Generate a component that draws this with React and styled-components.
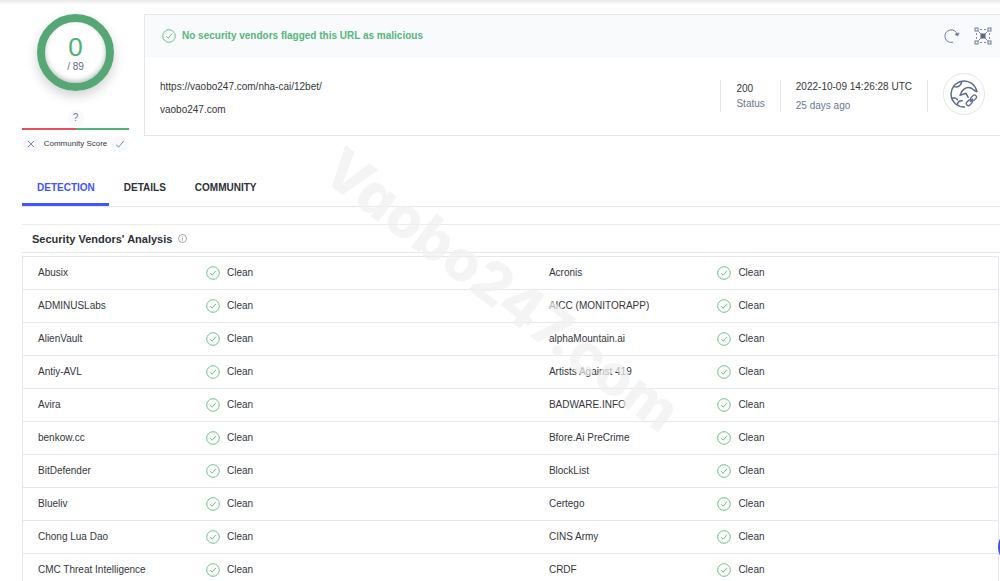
import React, { useState } from "react";
import styled, { createGlobalStyle } from "styled-components";

const GlobalStyle = createGlobalStyle`
    * {
        box-sizing: border-box;
    }

    body {
        margin: 0;
        overflow: hidden;
        background: #fff;
        color: #34363b;
        font-family: "Liberation Sans", Arial, sans-serif;
        font-size: 10px;
        line-height: 16px;
    }

    button {
        padding: 0;
        border: 0;
        background: none;
        color: inherit;
        font: inherit;
        cursor: pointer;
    }
`;

const vendors = [
    ["Abusix", "Acronis"],
    ["ADMINUSLabs", "AICC (MONITORAPP)"],
    ["AlienVault", "alphaMountain.ai"],
    ["Antiy-AVL", "Artists Against 419"],
    ["Avira", "BADWARE.INFO"],
    ["benkow.cc", "Bfore.Ai PreCrime"],
    ["BitDefender", "BlockList"],
    ["Blueliv", "Certego"],
    ["Chong Lua Dao", "CINS Army"],
    ["CMC Threat Intelligence", "CRDF"],
];

const tabs = ["DETECTION", "DETAILS", "COMMUNITY"];

function CheckIcon() {
    return (
        <svg width="14" height="14" viewBox="0 0 14 14" fill="none" stroke="#69c389" aria-hidden="true">
            <circle cx="7" cy="7" r="6.3" />
            <path d="M4.2 7.2l2 2 3.7-4.4" />
        </svg>
    );
}

function RefreshIcon() {
    return (
        <svg width="16" height="16" viewBox="0 0 16 16" fill="none" stroke="#6f7896" aria-hidden="true">
            <path d="M9 14.2A6.3 6.3 0 1 1 13.4 7" />
            <path d="M10.8 6.2l2.9 1.9 1.5-3.2z" fill="#6f7896" strokeWidth="0.5" />
        </svg>
    );
}

function GraphIcon() {
    return (
        <svg width="18" height="18" viewBox="0 0 18 18" fill="none" stroke="#6f7896" aria-hidden="true">
            <rect x="1" y="1" width="3" height="3" />
            <rect x="14" y="1" width="3" height="3" />
            <rect x="1" y="14" width="3" height="3" />
            <rect x="14" y="14" width="3" height="3" />
            <path d="M6 2.5h2M10 2.5h2M6 15.5h2M10 15.5h2M2.5 6v2M2.5 10v2M15.5 6v2M15.5 10v2" strokeWidth="0.9" />
            <path d="M4.3 4.3l9.4 9.4M13.7 4.3l-9.4 9.4" strokeWidth="0.9" />
            <rect x="6.5" y="6.5" width="5" height="5" fill="#5c6788" stroke="none" />
        </svg>
    );
}

function GlobeIcon() {
    return (
        <svg width="28" height="28" viewBox="0 0 28 28" fill="none" stroke="#5f6b8e" strokeWidth="1.5" strokeLinecap="round" strokeLinejoin="round" aria-hidden="true">
            <path d="M14.5 27A13 13 0 1 1 26.8 11.5" />
            <path d="M4.4 6.6c3.4 1 6.4-.6 7.2-4.6" />
            <path d="M26.8 11.5c-2-.2-3-1.6-5-3-2.400-1.400-5.800-1-7.800.6-1.800 1.400-3.400 3.600-4 6.200l6-2 2.200 4" />
            <path d="M1.800 18.200c2.600-.6 5 .2 5.800 1.600" />
            <path d="M7.400 24.400c.2-2.400 2-4 4.800-3.600" />
            <rect x="20.400" y="15.800" width="6.400" height="4.200" rx="2.100" transform="rotate(-45 23.600 17.900)" strokeWidth="1.300" />
            <rect x="16" y="20.600" width="6.400" height="4.200" rx="2.100" transform="rotate(-45 19.200 22.700)" strokeWidth="1.300" />
            <path d="M20.200 21.600l2.600-2.600" strokeWidth="1.300" />
        </svg>
    );
}

function InfoIcon() {
    return (
        <svg width="9" height="9" viewBox="0 0 9 9" fill="none" stroke="#8b90a5" strokeWidth="0.8" aria-hidden="true">
            <circle cx="4.5" cy="4.5" r="4" />
            <path d="M4.5 4v2.8M4.5 2.2v.9" />
        </svg>
    );
}

function Verdict() {
    return (
        <VerdictBox>
            <CheckIcon />
            Clean
        </VerdictBox>
    );
}

function App() {
    const [activeTab, setActiveTab] = useState(tabs[0]);

    return (
        <>
            <GlobalStyle />
            <Page>
                <Summary>
                    <Score>
                        <Gauge>
                            <GaugeValue>0</GaugeValue>
                            <span>/ 89</span>
                        </Gauge>
                        <Bubble>?</Bubble>
                        <ScoreLine />
                        <Votes>
                            <VoteButton type="button" aria-label="Vote down">
                                <svg width="8" height="8" viewBox="0 0 8 8" stroke="#7f88a2" fill="none">
                                    <path d="M1 1l6 6M7 1L1 7" />
                                </svg>
                            </VoteButton>
                            <span>Community Score</span>
                            <VoteButton type="button" aria-label="Vote up">
                                <svg width="8" height="8" viewBox="0 0 8 8" stroke="#7f88a2" fill="none">
                                    <path d="M0 4.6l2.6 2.6L7.8.8" />
                                </svg>
                            </VoteButton>
                        </Votes>
                    </Score>
                    <Card>
                        <CardHeader>
                            <CheckIcon />
                            <Headline>No security vendors flagged this URL as malicious</Headline>
                            <IconButton type="button" aria-label="Reanalyze">
                                <RefreshIcon />
                            </IconButton>
                            <IconButton type="button" aria-label="Graph">
                                <GraphIcon />
                            </IconButton>
                        </CardHeader>
                        <CardBody>
                            <Address>
                                <div>https://vaobo247.com/nha-cai/12bet/</div>
                                <div>vaobo247.com</div>
                            </Address>
                            <Fact>
                                <div>200</div>
                                <Muted>Status</Muted>
                            </Fact>
                            <Fact $gap="4px">
                                <div>2022-10-09 14:26:28 UTC</div>
                                <Muted>25 days ago</Muted>
                            </Fact>
                            <Fact>
                                <GlobeBadge>
                                    <GlobeIcon />
                                </GlobeBadge>
                            </Fact>
                        </CardBody>
                    </Card>
                </Summary>

                <Tabs role="tablist">
                    {tabs.map((tab) => (
                        <Tab
                            key={tab}
                            type="button"
                            role="tab"
                            aria-selected={tab === activeTab}
                            $active={tab === activeTab}
                            onClick={() => setActiveTab(tab)}
                        >
                            {tab}
                        </Tab>
                    ))}
                </Tabs>

                <SectionTitle>
                    Security Vendors' Analysis
                    <InfoIcon />
                </SectionTitle>
                <VendorTable>
                    <colgroup>
                        <col style={{ width: "18.8%" }} />
                        <col style={{ width: "33.6%" }} />
                        <col style={{ width: "18.8%" }} />
                        <col />
                    </colgroup>
                    <tbody>
                        {vendors.map(([left, right]) => (
                            <tr key={left}>
                                <NameCell>{left}</NameCell>
                                <StatusCell><Verdict /></StatusCell>
                                <NameCell>{right}</NameCell>
                                <StatusCell><Verdict /></StatusCell>
                            </tr>
                        ))}
                    </tbody>
                </VendorTable>
            </Page>
            <Watermark>Vaobo247.com</Watermark>
            <ChatButton type="button" aria-label="Open chat" />
        </>
    );
}

export default App;

const Page = styled.div`
    padding: 14px 0 0 22px;
    background: linear-gradient(#e9e9ea, #fff) top / 100% 5px no-repeat;
`;

const Summary = styled.header`
    display: flex;
    align-items: flex-start;
    gap: 15px;
`;

const Score = styled.div`
    display: flex;
    flex-direction: column;
    align-items: center;
    width: 107px;
    font-size: 8px;
`;

const Gauge = styled.div`
    display: flex;
    flex-direction: column;
    align-items: center;
    justify-content: center;
    width: 77px;
    height: 77px;
    border: 8px solid #55a775;
    border-radius: 50%;
    box-shadow: 0 5px 12px rgba(0, 0, 0, 0.18), inset 0 -2px 5px rgba(0, 0, 0, 0.25);
    color: #5f6a8a;
    font-size: 10px;
    line-height: 12px;
`;

const GaugeValue = styled.div`
    color: #4cb270;
    font-size: 26px;
    line-height: 28px;
`;

const Bubble = styled.div`
    width: 16px;
    height: 16px;
    margin-top: 19px;
    border-radius: 50%;
    background: #f8f9fc;
    color: #6f7896;
    font-size: 10px;
    text-align: center;
`;

const ScoreLine = styled.div`
    width: 100%;
    height: 2px;
    margin: 2px 0 6px;
    background: linear-gradient(90deg, #e5505f 50%, #55b077 50%);
`;

const Votes = styled.div`
    display: flex;
    align-items: center;
    justify-content: space-between;
    width: 100%;
`;

const VoteButton = styled.button`
    display: flex;
    align-items: center;
    justify-content: center;
    width: 18px;
    height: 16px;
    border-radius: 50%;
    background: #f8f9fc;
`;

const Card = styled.section`
    flex: 1;
    border: 1px solid #e6e7ea;
    border-right: 0;
`;

const CardHeader = styled.div`
    display: flex;
    align-items: center;
    height: 42px;
    padding: 0 8px 0 17px;
    background: #f8fafc;
`;

const Headline = styled.h1`
    flex: 1;
    margin: 0 0 0 6px;
    color: #55b77a;
    font-size: 10px;
`;

const IconButton = styled.button`
    display: flex;
    margin-left: 14px;
`;

const CardBody = styled.div`
    display: flex;
    align-items: center;
    height: 78px;
    padding-right: 15px;
`;

const Address = styled.div`
    display: flex;
    flex: 1;
    flex-direction: column;
    gap: 7px;
    padding: 4px 0 0 15px;
`;

const Fact = styled.div`
    display: flex;
    flex-direction: column;
    justify-content: center;
    gap: ${(props) => props.$gap || "0"};
    height: 32px;
    padding: 0 15px;
    border-left: 1px solid #e6e7ea;
    line-height: 15px;

    &:last-child {
        padding-right: 0;
    }
`;

const Muted = styled.div`
    color: #6a7593;
`;

const GlobeBadge = styled.div`
    display: flex;
    flex: none;
    align-items: center;
    justify-content: center;
    width: 42px;
    height: 42px;
    margin-bottom: 4px;
    border: 1px solid #e4e6ea;
    border-radius: 50%;
`;

const Tabs = styled.nav`
    display: flex;
    margin-top: 18px;
    border-bottom: 1px solid #e9e9eb;
`;

const Tab = styled.button`
    height: 36px;
    padding: 0 14px 0 15px;
    border-top: 3px solid transparent;
    border-bottom: 3px solid ${(props) => (props.$active ? "#4353ff" : "transparent")};
    color: ${(props) => (props.$active ? "#4353ff" : "#2e3036")};
    font-weight: bold;
`;

const SectionTitle = styled.h2`
    display: flex;
    align-items: center;
    gap: 6px;
    height: 29px;
    margin: 17px 0 3px;
    padding-left: 10px;
    border-top: 1px solid #ececee;
    border-bottom: 1px solid #e9e9eb;
    color: #2e3036;
    font-size: 11px;
`;

const VendorTable = styled.table`
    width: calc(100% - 1px);
    border: 1px solid #e6e7ea;
    border-collapse: collapse;
    table-layout: fixed;

    tr {
        height: 33px;
        border-bottom: 1px solid #e6e7ea;
    }
`;

const NameCell = styled.td`
    padding: 0 0 0 15px;
`;

const StatusCell = styled.td`
    padding: 0;
`;

const VerdictBox = styled.div`
    display: flex;
    align-items: center;
    gap: 7px;
`;

const Watermark = styled.div`
    position: absolute;
    top: 250px;
    left: 272px;
    width: 460px;
    color: rgba(239, 239, 240, 0.7);
    font-family: Inter, "Open Sans", sans-serif;
    font-size: 57px;
    font-weight: 800;
    font-feature-settings: "cv11";
    line-height: 80px;
    text-align: center;
    white-space: nowrap;
    transform: rotate(37deg);
    pointer-events: none;
`;

const ChatButton = styled.button`
    position: fixed;
    right: -36px;
    bottom: 15px;
    width: 38px;
    height: 38px;
    border-radius: 50%;
    background: #3f4ff0;
`;
